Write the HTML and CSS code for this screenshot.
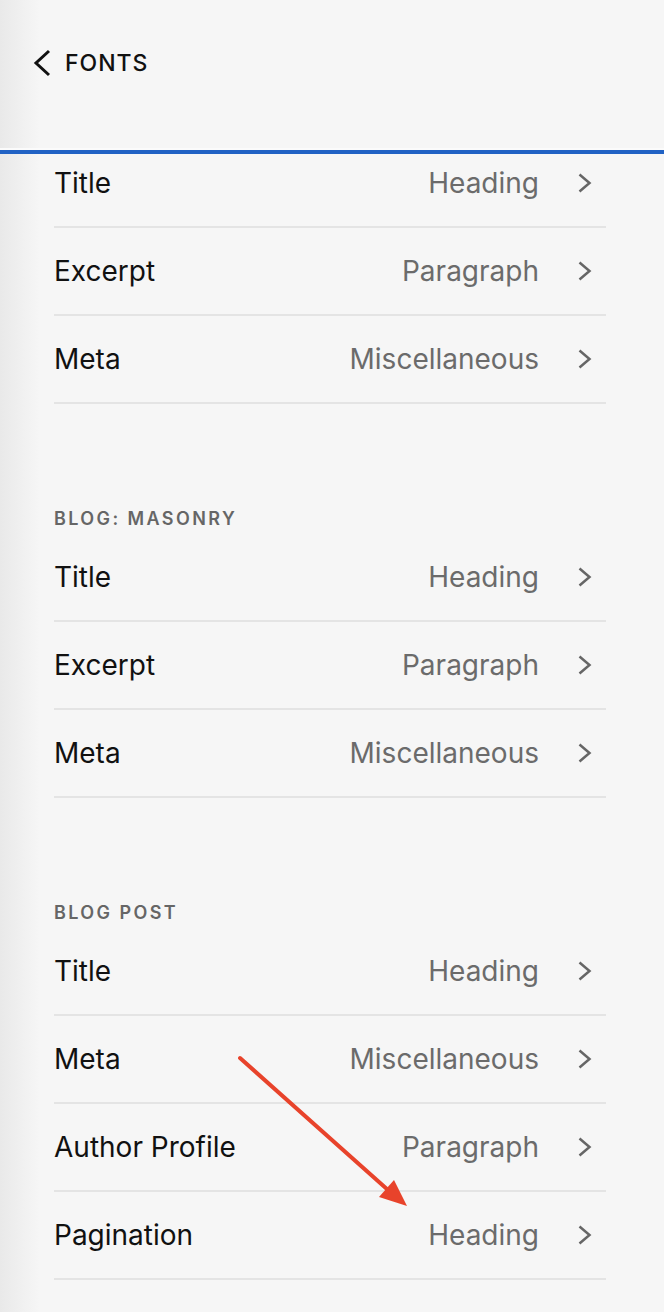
FILE: index.html
```html
<!DOCTYPE html>
<html lang="en">
<head>
    <meta charset="UTF-8">
    <meta name="viewport" content="width=device-width, initial-scale=1.0">
    <title>Fonts</title>
    <link rel="stylesheet" href="styles.css">
</head>
<body>

    <header class="topbar">
        <a class="back" href="#">
            <svg class="back-icon" width="20" height="28" viewBox="0 0 20 28"><path d="M17 2 L4 14 L17 26" fill="none" stroke="#111" stroke-width="3"/></svg>
            <span>FONTS</span>
        </a>
    </header>

    <main class="panel">
        <div class="scroll">
            <section class="group group-first">
                <ul class="rows">
                    <li class="row"><span class="row-label">Title</span><span class="row-value">Heading</span><svg class="chev" width="15" height="20" viewBox="0 0 15 20"><path d="M2.5 1.5 L12.5 10 L2.5 18.5" fill="none" stroke="#666" stroke-width="2.5"/></svg></li>
                    <li class="row"><span class="row-label">Excerpt</span><span class="row-value">Paragraph</span><svg class="chev" width="15" height="20" viewBox="0 0 15 20"><path d="M2.5 1.5 L12.5 10 L2.5 18.5" fill="none" stroke="#666" stroke-width="2.5"/></svg></li>
                    <li class="row"><span class="row-label">Meta</span><span class="row-value">Miscellaneous</span><svg class="chev" width="15" height="20" viewBox="0 0 15 20"><path d="M2.5 1.5 L12.5 10 L2.5 18.5" fill="none" stroke="#666" stroke-width="2.5"/></svg></li>
                </ul>
            </section>

            <section class="group">
                <h2 class="group-title">BLOG: MASONRY</h2>
                <ul class="rows">
                    <li class="row"><span class="row-label">Title</span><span class="row-value">Heading</span><svg class="chev" width="15" height="20" viewBox="0 0 15 20"><path d="M2.5 1.5 L12.5 10 L2.5 18.5" fill="none" stroke="#666" stroke-width="2.5"/></svg></li>
                    <li class="row"><span class="row-label">Excerpt</span><span class="row-value">Paragraph</span><svg class="chev" width="15" height="20" viewBox="0 0 15 20"><path d="M2.5 1.5 L12.5 10 L2.5 18.5" fill="none" stroke="#666" stroke-width="2.5"/></svg></li>
                    <li class="row"><span class="row-label">Meta</span><span class="row-value">Miscellaneous</span><svg class="chev" width="15" height="20" viewBox="0 0 15 20"><path d="M2.5 1.5 L12.5 10 L2.5 18.5" fill="none" stroke="#666" stroke-width="2.5"/></svg></li>
                </ul>
            </section>

            <section class="group">
                <h2 class="group-title">BLOG POST</h2>
                <ul class="rows">
                    <li class="row"><span class="row-label">Title</span><span class="row-value">Heading</span><svg class="chev" width="15" height="20" viewBox="0 0 15 20"><path d="M2.5 1.5 L12.5 10 L2.5 18.5" fill="none" stroke="#666" stroke-width="2.5"/></svg></li>
                    <li class="row"><span class="row-label">Meta</span><span class="row-value">Miscellaneous</span><svg class="chev" width="15" height="20" viewBox="0 0 15 20"><path d="M2.5 1.5 L12.5 10 L2.5 18.5" fill="none" stroke="#666" stroke-width="2.5"/></svg></li>
                    <li class="row"><span class="row-label">Author Profile</span><span class="row-value">Paragraph</span><svg class="chev" width="15" height="20" viewBox="0 0 15 20"><path d="M2.5 1.5 L12.5 10 L2.5 18.5" fill="none" stroke="#666" stroke-width="2.5"/></svg></li>
                    <li class="row"><span class="row-label">Pagination</span><span class="row-value">Heading</span><svg class="chev" width="15" height="20" viewBox="0 0 15 20"><path d="M2.5 1.5 L12.5 10 L2.5 18.5" fill="none" stroke="#666" stroke-width="2.5"/></svg></li>
                </ul>
            </section>
        </div>
    </main>

    <!-- annotation arrow drawn over the list -->
    <svg class="annotation" width="664" height="1312" viewBox="0 0 664 1312">
        <line x1="240" y1="1058" x2="388" y2="1190" stroke="#e8432b" stroke-width="4" stroke-linecap="round"/>
        <polygon points="407,1206 379,1197 394,1180" fill="#e8432b"/>
    </svg>

</body>
</html>
```

FILE: styles.css
```css
body {
    font-family: Inter, "Noto Sans", sans-serif;
    background: linear-gradient(to right, #e9e9e9, #f6f6f6 40px);
    margin: 0;
    height: 1312px;
    overflow: hidden;
    position: relative;
    color: #111;
}

.topbar {
    height: 148px;
    border-bottom: 2px solid #fbfbfb;
    box-shadow: 0 4px 0 #2162c4;
    position: relative;
    z-index: 1;
    display: flex;
    align-items: flex-start;
    padding-left: 32px;
}

.back {
    display: flex;
    align-items: center;
    margin-top: 49px;
    color: #111;
    text-decoration: none;
    font-size: 23px;
    font-weight: 500;
    letter-spacing: 1px;
}

.back-icon {
    margin-right: 13px;
}

.panel {
    margin-top: 4px;
    overflow: hidden;
}

.scroll {
    margin-top: -14px;
}

.group {
    padding: 105px 58px 0 54px;
}

.group-first {
    padding-top: 0;
}

.group-title {
    margin: 0 0 5px;
    height: 20px;
    line-height: 20px;
    font-size: 18px;
    font-weight: 600;
    letter-spacing: 2.4px;
    color: #666;
}

.rows {
    list-style: none;
    margin: 0;
    padding: 0;
}

.row {
    display: flex;
    align-items: center;
    height: 86px;
    border-bottom: 2px solid #e4e4e4;
    font-size: 28px;
}

.row-label {
    flex: 1;
    color: #111;
}

.row-value {
    color: #6b6b6b;
    margin-right: 38px;
}

.chev {
    margin-right: 14px;
}

.annotation {
    position: absolute;
    top: 0;
    left: 0;
    pointer-events: none;
    z-index: 2;
}
```
